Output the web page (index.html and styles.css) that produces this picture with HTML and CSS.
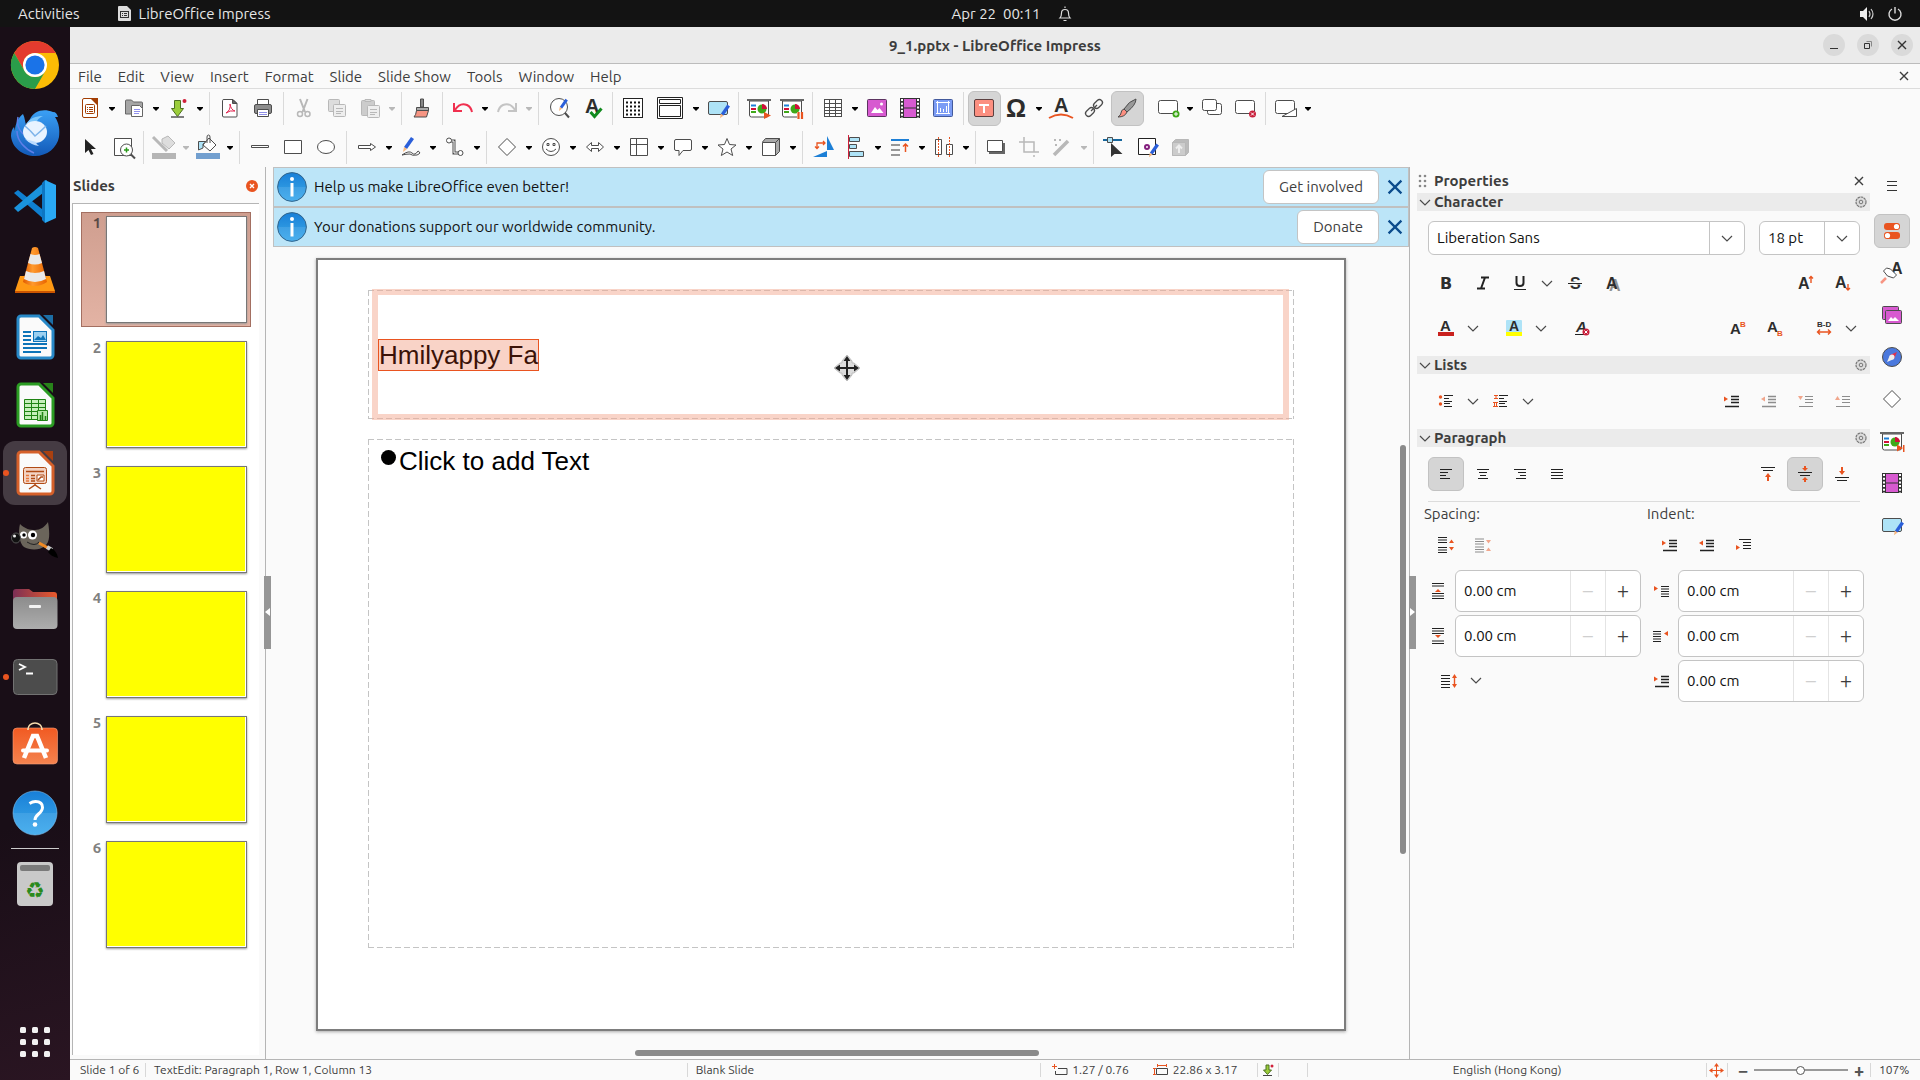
FILE: index.html
```html
<!DOCTYPE html>
<html lang="en">
<head>
  <meta charset="UTF-8">
  <meta name="viewport" content="width=device-width, initial-scale=1">
  <title>9_1.pptx - LibreOffice Impress</title>
  <link rel="stylesheet" href="styles.css">
</head>
<body>
  <!-- Shared shapes -->
  <svg class="defs" aria-hidden="true">
    <linearGradient id="gInfo" x1="0" y1="0" x2="0" y2="1"><stop offset="0" stop-color="#187fd8"/><stop offset=".5" stop-color="#2b95e0"/><stop offset=".5" stop-color="#3fa0e4"/><stop offset="1" stop-color="#4bb0ee"/></linearGradient>
    <linearGradient id="gBird" x1="0" y1="0" x2="0" y2="1"><stop offset="0" stop-color="#3ba0f5"/><stop offset="1" stop-color="#1259b8"/></linearGradient>
    <linearGradient id="gCone" x1="0" y1="0" x2="1" y2="0"><stop offset="0" stop-color="#e05a00"/><stop offset=".4" stop-color="#ff9a2e"/><stop offset="1" stop-color="#e86400"/></linearGradient>
    <linearGradient id="gFolder" x1="0" y1="0" x2="1" y2="0"><stop offset="0" stop-color="#7b2f55"/><stop offset="1" stop-color="#ea5b2c"/></linearGradient>
    <linearGradient id="gGrey" x1="0" y1="0" x2="0" y2="1"><stop offset="0" stop-color="#8c8c8c"/><stop offset="1" stop-color="#adadad"/></linearGradient>
    <linearGradient id="gBag" x1="0" y1="0" x2="0" y2="1"><stop offset="0" stop-color="#f15a22"/><stop offset="1" stop-color="#f4834f"/></linearGradient>
    <symbol id="caret" viewBox="0 0 8 4"><path d="M1 0h6v1L4 4 1 1z" fill="currentColor"/></symbol>
    <symbol id="chev" viewBox="0 0 12 7"><path d="M1 1l5 5 5-5" fill="none" stroke="#4a4a4a" stroke-width="1.2"/></symbol>
    <symbol id="cross" viewBox="0 0 10 10"><path d="M1 1l8 8M9 1L1 9" fill="none" stroke="currentColor" stroke-width="1.4"/></symbol>
    <symbol id="gear" viewBox="0 0 12 12"><circle cx="6" cy="6" r="5" fill="#dcdcdc" stroke="#777" stroke-width="1.2" stroke-dasharray="2.6 .6"/><circle cx="6" cy="6" r="1.8" fill="none" stroke="#777"/></symbol>
    <symbol id="info" viewBox="0 0 30 30"><circle cx="15" cy="15" r="14.4" fill="url(#gInfo)" stroke="#33658c"/><circle cx="15" cy="7" r="2" fill="#fff"/><path d="M13.5 11h3v13.500h-3z" fill="#fff"/></symbol>
    <symbol id="pencil" viewBox="0 0 12 16"><path d="M2 11L9 1l3 2-7 10z" fill="#2b5fd9"/><path d="M2 11l3 2-4 3z" fill="#f7b77f"/></symbol>
    <symbol id="screen" viewBox="0 0 24 24"><path d="M2.500 5v14a2 2 0 0 0 2 2h15a2 2 0 0 0 2-2V5z" fill="#fff" stroke="#4d4d4d"/><path d="M0 3h24v2H0z" fill="#666"/><path d="M4 8.500h5v2H4z" fill="#1c7fd6"/><path d="M4 12h5v2H4z" fill="#d0103a"/><path d="M4 15h5v2H4z" fill="#3fa819"/><circle cx="15" cy="13" r="4.500" fill="#3fa819"/><path d="M15 13V8a5 5 0 0 1 5 5z" fill="#d0103a"/></symbol>
    <symbol id="film" viewBox="0 0 24 24"><path d="M2 2h20v20H2z" fill="#333"/><path d="M6 3h12v8.500H6zM6 12.500h12V21H6z" fill="#d75ad0"/><path d="M4 3v19M20 3v19" stroke="#fff" stroke-width="2" stroke-dasharray="2 1.700"/></symbol>
    <symbol id="master" viewBox="0 0 24 24"><rect x="2.500" y="5.500" width="19" height="13" rx="1.500" fill="#aee3f7" stroke="#4d4d4d"/><use href="#pencil" x="13" y="7" width="11" height="16"/></symbol>
    <symbol id="indent" viewBox="0 0 16 14"><path d="M8 2.500h8M8 5.500h8M8 8.500h8M2 12.500h14" stroke="#222" stroke-width="1.300" /><path d="M1 2.500l4 2.500-4 2.500z" fill="#e95420"/></symbol>
    <symbol id="outdent" viewBox="0 0 16 14"><path d="M8 2.500h8M8 5.500h8M8 8.500h8M2 12.500h14" stroke="#222" stroke-width="1.300"/><path d="M5 2.500L1 5l4 2.500z" fill="#e95420"/></symbol>
  </svg>

  <!-- Desktop top bar -->
  <header class="topbar">
    <div class="topbar-left">
      <button>Activities</button>
      <button class="app-name"><svg width="13" height="15" viewBox="0 0 13 15"><path d="M1 0h8l4 4v10a1 1 0 0 1-1 1H1a1 1 0 0 1-1-1V1a1 1 0 0 1 1-1z" fill="#ddd"/><rect x="2.500" y="5.500" width="8" height="6" fill="none" stroke="#333"/><path d="M4 7.500h1M6 7.500h3M4 9.500h1M6 9.500h3" stroke="#333"/></svg>LibreOffice Impress</button>
    </div>
    <div class="topbar-mid"><time>Apr 22&nbsp; 00:11</time>
      <svg width="14" height="16" viewBox="0 0 14 16" fill="none" stroke="#ddd" stroke-width="1.200"><path d="M2 12c1-1 1.500-2 1.500-5a3.500 3.500 0 0 1 7 0c0 3 .5 4 1.500 5zM5.500 14.500h3M7 2V.5"/></svg>
    </div>
    <div class="topbar-right">
      <svg width="15" height="14" viewBox="0 0 15 14"><path d="M0 4h3l4-4v14l-4-4H0z" fill="#eee"/><path d="M9 4q2 3 0 6M11 2q4 5 0 10" fill="none" stroke="#ccc" stroke-width="1.200"/></svg>
      <svg width="14" height="14" viewBox="0 0 14 14" fill="none" stroke="#ddd" stroke-width="1.400"><path d="M4 2a6 6 0 1 0 6 0M7 0v6.500"/></svg>
    </div>
  </header>

  <div class="desktop">
    <nav class="dock" aria-label="Dock">
      <button title="Chrome"><svg viewBox="0 0 48 48"><circle cx="24" cy="24" r="24" fill="#fbbc05"/><path d="M3.200 12A24 24 0 0 1 44.800 12H24a12 12 0 0 0-10.400 18z" fill="#e33b2e"/><path d="M3.200 12A24 24 0 0 0 24 48l10.400-18a12 12 0 0 1-20.800 0z" fill="#2a9d4a"/><circle cx="24" cy="24" r="12" fill="#fff"/><circle cx="24" cy="24" r="9.600" fill="#1a73e8"/></svg></button>
      <button title="Thunderbird"><svg viewBox="0 0 48 48"><path d="M19 10C23 2 32-1 42 3c3 0 4 2 5 5l-3 0c4 6 5 13 4 20-2 11-12 19-24 19S1 39 0 27c0-4 1-7 3-9l1 4C4 14 8 8 12 5c2 4 2 8 3 11z" fill="url(#gBird)"/><path d="M15 15c4-6 10-8 17-8-6 3-7 6-6 8z" fill="#7cc6fb"/><path d="M7 8c-2 8 1 13 5 17M6 22c0 10 8 18 17 22" fill="none" stroke="#5f7fe8" stroke-width="1.500"/><ellipse cx="24" cy="23" rx="12" ry="11" fill="#e8f3ff"/><path d="M14 17q6 5 10 10 6-5 11-10" fill="none" stroke="#7eb4ea" stroke-width="1.500"/><path d="M14 30q6 6 14 7-3-2-3-4" fill="#bcdcff"/></svg></button>
      <button title="Visual Studio Code"><svg viewBox="0 0 48 48"><path d="M3 16l4-3 29 23v9z" fill="#0f7fd0"/><path d="M3 31l4 4 29-22V3z" fill="#1a93dd"/><path d="M34 3l11 5v33l-11 5z" fill="#2aa9f4"/><path d="M34 3v43l-3-3V6z" fill="#0d76c2"/></svg></button>
      <button title="VLC"><svg viewBox="0 0 48 48"><path d="M9 31h30l5 15v1.500H4V46z" fill="#ff9914"/><path d="M4 46h40v2H4z" fill="#cc5500"/><path d="M21 3q3-2 6 0l9 34q-12 8-24 0z" fill="url(#gCone)"/><path d="M19.500 9q4.500 2 9 0l2.500 9q-7 3-14 0zM15 26q9 4 18 0l2 8q-11 6-22 0z" fill="#e9e9e9"/></svg></button>
      <button title="Writer"><svg viewBox="0 0 48 48"><path d="M10 3h18l14 14v25a3 3 0 0 1-3 3H10a3 3 0 0 1-3-3V6a3 3 0 0 1 3-3z" fill="#fafafa" stroke="#2889c8" stroke-width="3"/><path d="M32 2h10v10z" fill="#1c6ea6"/><path d="M12 19h8M12 23h8M12 27h8M12 31h24M12 35h24M12 39h18" stroke="#0e74b8" stroke-width="2"/><rect x="22.500" y="18.500" width="13" height="10" fill="#9bd0f0" stroke="#0e74b8"/><path d="M23 27l4-4 3 2 2-3 3 5z" fill="#0e74b8"/></svg></button>
      <button title="Calc"><svg viewBox="0 0 48 48"><path d="M10 3h18l14 14v25a3 3 0 0 1-3 3H10a3 3 0 0 1-3-3V6a3 3 0 0 1 3-3z" fill="#fafafa" stroke="#2b9c23" stroke-width="3"/><path d="M32 2h10v10z" fill="#28831a"/><path d="M13.500 18.500h21v20h-21z" fill="#c6efbb" stroke="#1f8313"/><path d="M13 22.500h22M13 26.500h22M13 30.500h22M13 34.500h22M20.500 18v20M27.500 18v20" stroke="#1f8313"/><path d="M26.500 29.500h10v10h-10z" fill="#b5e8a7" stroke="#1f8313"/><path d="M29.500 39v-5M31.500 39v-8M34.500 39v-4" stroke="#1f8313" stroke-width="1.500"/></svg></button>
      <button class="active running" title="Impress"><svg viewBox="0 0 48 48"><path d="M10 3h18l14 14v25a3 3 0 0 1-3 3H10a3 3 0 0 1-3-3V6a3 3 0 0 1 3-3z" fill="#fafafa" stroke="#d5602a" stroke-width="3"/><path d="M32 2h10v10z" fill="#a94010"/><rect x="12.500" y="18.500" width="23" height="16" rx="2" fill="#f3d3c3" stroke="#b04a14"/><path d="M15 22.500h18M20 26.500h4M20 29.500h4M20 32h4" stroke="#b04a14" stroke-width="1.500"/><path d="M15 26.500h3M15 29.500h3M15 32h3" stroke="#e8793c" stroke-width="1.500"/><path d="M26 26h7v6h-7z" fill="#fff" stroke="#b04a14"/><path d="M27 31l3-3 2 0M18 40l6-4 6 4M24 34v3" fill="none" stroke="#b04a14" stroke-width="1.500"/></svg></button>
      <button title="GIMP"><svg viewBox="0 0 48 48"><path d="M9 7c5 5 10 6 15 6s10-3 13-8c2 12 2 20-3 24-6 5-16 4-21 1-5-4-6-15-4-23z" fill="#6b655b"/><circle cx="12.500" cy="18" r="3.500" fill="#fff"/><circle cx="21.500" cy="18" r="4.500" fill="#fff"/><circle cx="13" cy="18" r="1.700"/><circle cx="22" cy="18" r="2.200"/><ellipse cx="5" cy="21" rx="4.500" ry="5" fill="#111" stroke="#555"/><circle cx="3.500" cy="19" r="1.500" fill="#eee"/><path d="M16 25q8 5 12 0" fill="none" stroke="#222"/><path d="M28 26l9 5" stroke="#f08a24" stroke-width="3"/><path d="M36 30l5 3" stroke="#ccc" stroke-width="4"/><path d="M40 31c4 2 6 5 7 10-5-1-8-3-10-6z" fill="#000"/></svg></button>
      <button title="Files"><svg viewBox="0 0 48 48"><path d="M2 7a3 3 0 0 1 3-3h13l4 3h21a3 3 0 0 1 3 3v12H2z" fill="url(#gFolder)"/><rect x="2" y="12" width="44.500" height="32" rx="4" fill="url(#gGrey)"/><rect x="18" y="20" width="12" height="3" rx="1" fill="#f2f2f2"/></svg></button>
      <button class="running" title="Terminal"><svg viewBox="0 0 48 48"><rect x="2.500" y="6.500" width="43.500" height="35" rx="4" fill="#4c4c4c" stroke="#727272"/><path d="M8 11l6 3-6 3M15 20.500h7" fill="none" stroke="#fff" stroke-width="1.800"/></svg></button>
      <button title="Software"><svg viewBox="0 0 48 48"><rect x="2" y="7" width="44.500" height="36" rx="4" fill="url(#gBag)" stroke="#f7a07a" stroke-width=".6"/><path d="M17 9V8a7 6 0 0 1 14 0v1" fill="none" stroke="#f7dcae" stroke-width="1.600"/><path d="M13 37l9-22h4l9 22" fill="none" stroke="#fff" stroke-width="4.500"/><path d="M12 29.500h24" stroke="#fff" stroke-width="4" stroke-linecap="round"/></svg></button>
      <button title="Help"><svg viewBox="0 0 48 48"><circle cx="24" cy="24" r="22" fill="url(#gInfo)" stroke="#7dc3f3" stroke-width=".6"/><path d="M18.500 14.500q3-2 6-2 7 0 7 6 0 3-4 6.500-3.500 3-3.500 6" fill="none" stroke="#fff" stroke-width="3"/><circle cx="24" cy="35.500" r="2.300" fill="#fff"/></svg></button>
      <hr>
      <button title="Trash"><svg viewBox="0 0 48 48"><rect x="6" y="2" width="36" height="44" rx="4" fill="#c9c9c9"/><rect x="9" y="5" width="30" height="6" rx="2" fill="#7a7a7a"/></svg><span class="recycle">♻</span></button>
      <button class="apps" title="Show Applications"><svg viewBox="0 0 30 30" fill="#f2f2f2"><rect width="6" height="6" rx="1.500"/><rect x="12" width="6" height="6" rx="1.500"/><rect x="24" width="6" height="6" rx="1.500"/><rect y="12" width="6" height="6" rx="1.500"/><rect x="12" y="12" width="6" height="6" rx="1.500"/><rect x="24" y="12" width="6" height="6" rx="1.500"/><rect y="24" width="6" height="6" rx="1.500"/><rect x="12" y="24" width="6" height="6" rx="1.500"/><rect x="24" y="24" width="6" height="6" rx="1.500"/></svg></button>
    </nav>

    <div class="window">
      <div class="titlebar">
        <h1>9_1.pptx - LibreOffice Impress</h1>
        <div class="win-buttons">
          <button title="Minimize"><svg width="10" height="10" viewBox="0 0 10 10"><path d="M1 8.500h8" stroke="#333"/></svg></button>
          <button title="Restore"><svg width="10" height="10" viewBox="0 0 10 10" fill="none"><path d="M1.500 3.500h5v5h-5z" stroke="#333"/><path d="M3.500 1.500h5v5" stroke="#888"/></svg></button>
          <button title="Close"><svg width="10" height="10"><use href="#cross"/></svg></button>
        </div>
      </div>

      <div class="menubar">
        <nav>
          <button>File</button><button>Edit</button><button>View</button><button>Insert</button><button>Format</button><button>Slide</button><button>Slide Show</button><button>Tools</button><button>Window</button><button>Help</button>
        </nav>
        <button title="Close Document"><svg width="10" height="10"><use href="#cross"/></svg></button>
      </div>

      <!-- Standard toolbar -->
      <div class="toolbar">
        <button class="tool" title="New"><svg viewBox="0 0 24 24"><path d="M6 2.500h8.500l5 5V20a1.500 1.500 0 0 1-1.500 1.500H6A1.500 1.500 0 0 1 4.500 20V4A1.500 1.500 0 0 1 6 2.500z" stroke="#a33e03" fill="#fff"/><path d="M12 2h8v8z" fill="#a33e03" stroke="none"/><rect x="7.500" y="8.500" width="9" height="9" rx="1" stroke="#a33e03"/><path d="M9 11.500h1M11 11.500h4M9 13.500h1M11 13.500h4M9 15.500h1M11 15.500h4" stroke="#a33e03"/></svg></button><button class="dd" title="New options"><svg><use href="#caret"/></svg></button>
        <button class="tool" title="Open"><svg viewBox="0 0 24 24"><path d="M3.500 18V5q0-1 1-1h5l2 2h8q1 0 1 1v11z" fill="#a5a5a5" stroke="#666"/><path d="M9.500 9.500h8l3 3v8h-11z" fill="#fff" stroke="#666"/><path d="M12 13.500h6M12 15.500h6M12 17.500h5" stroke="#9090ee"/></svg></button><button class="dd" title="Open options"><svg><use href="#caret"/></svg></button>
        <button class="tool" title="Save"><svg viewBox="0 0 24 24"><path d="M8.500 4.500h6v8h3l-6 8-6-8h3z" fill="#9bcd3a" stroke="#4d7020"/><path d="M5 21h13" stroke="#555" stroke-width="1.500"/><circle cx="18.500" cy="5" r="2" fill="#d0203a" stroke="none"/></svg></button><button class="dd" title="Save options"><svg><use href="#caret"/></svg></button>
        <hr>
        <button class="tool" title="Export as PDF"><svg viewBox="0 0 24 24"><path d="M6 3.500h9l4 4V20q0 1-1 1H6q-1.500 0-1.500-1V4.500q0-1 1.500-1z" fill="#fff"/><path d="M14.500 3.500v4H19z" fill="#666"/><path d="M8 17q5-3 4-9 1 6 5 7-5-1-9 2z" stroke="#e0244f"/></svg></button>
        <button class="tool" title="Print"><svg viewBox="0 0 24 24"><path d="M6.500 3.500h11v5h-11z" fill="#fff"/><rect x="3.500" y="8.500" width="17" height="9" rx="1.500" fill="#8d8d8d"/><path d="M6.500 13.500h11v7h-11z" fill="#fff"/><path d="M8 16.500h8M8 18.500h8" stroke="#8f8fe8"/></svg></button>
        <hr>
        <button class="tool" title="Cut" disabled><svg viewBox="0 0 24 24" class="dim"><path d="M8 3l5 13M15.500 3l-5 13" stroke-width="2"/><circle cx="8" cy="18" r="2.500" stroke-width="1.500"/><circle cx="15.500" cy="18" r="2.500" stroke-width="1.500"/></svg></button>
        <button class="tool" title="Copy" disabled><svg viewBox="0 0 24 24" class="dim"><rect x="3.500" y="3.500" width="11" height="12" rx="1" fill="#ddd"/><rect x="8.500" y="8.500" width="12" height="12" rx="1" fill="#eee"/><path d="M11 12.500h7M11 15.500h7M11 17.500h5"/></svg></button>
        <button class="tool" title="Paste" disabled><svg viewBox="0 0 24 24" class="dim"><rect x="3.500" y="4.500" width="13" height="15" rx="1" fill="#ccc"/><path d="M7 3.500h6v2H7z" fill="#ddd"/><rect x="9.500" y="9.500" width="12" height="12" rx="1" fill="#eee"/><path d="M12 13.500h7M12 16.500h7M12 18.500h5"/></svg></button><button class="dd" title="Paste options" disabled><svg><use href="#caret"/></svg></button>
        <hr>
        <button class="tool" title="Clone Formatting"><svg viewBox="0 0 24 24"><path d="M10.500 3h3v8h-3z" fill="#888"/><path d="M6.500 11.500h12v3h-12z" fill="#aaa"/><path d="M6.500 14.500h12l-2 6.500H4q2-2 2.500-6.500z" fill="#f79583"/></svg></button>
        <hr>
        <button class="tool" title="Undo"><svg viewBox="0 0 24 24"><path d="M3 7v8h8M4 14q5-8 12-5 4 2 5 7" stroke="#f0304f" stroke-width="2"/></svg></button><button class="dd" title="Undo list"><svg><use href="#caret"/></svg></button>
        <button class="tool" title="Redo" disabled><svg viewBox="0 0 24 24"><path d="M21 7v8h-8M20 14Q15 6 8 9q-4 2-5 7" stroke="#c4c4c4" stroke-width="2"/></svg></button><button class="dd" title="Redo list" disabled><svg><use href="#caret"/></svg></button>
        <hr>
        <button class="tool" title="Find and Replace"><svg viewBox="0 0 24 24"><circle cx="12" cy="11" r="8.500" fill="#fff"/><path d="M18 17l4 4.500" stroke-width="2"/><use href="#pencil" x="11" y="2" width="10" height="13"/></svg></button>
        <button class="tool" title="Spelling"><svg viewBox="0 0 24 24"><text x="5" y="17" class="ic-a" font-size="20">A</text><path d="M10.500 16l4 4.500 7-8" stroke="#118a1e" stroke-width="3"/></svg></button>
        <hr>
        <button class="tool" title="Display Grid"><svg viewBox="0 0 24 24"><rect x="2.500" y="2.500" width="19" height="19" fill="#fff" stroke="#222"/><path d="M5 6.500h14M5 10.500h14M5 14.500h14M5 18.500h14" stroke="#111" stroke-width="2" stroke-dasharray="2 2"/></svg></button>
        <button class="tool wide" title="Display Views"><svg viewBox="0 0 28 24"><path d="M1.500 1.500h25v21h-25z" fill="#fff" stroke="#222"/><path d="M3.500 3.500h21v4h-21zM3.500 9.500h21v11h-21z" stroke="#222"/></svg></button><button class="dd" title="Views"><svg><use href="#caret"/></svg></button>
        <button class="tool" title="Master Slide"><svg viewBox="0 0 24 24"><use href="#master"/></svg></button>
        <hr>
        <button class="tool" title="Start from First Slide"><svg viewBox="0 0 24 24"><use href="#screen"/><path d="M17 16l7 3.500-7 3.500z" fill="#e95420" stroke="none"/></svg></button>
        <button class="tool" title="Start from Current Slide"><svg viewBox="0 0 24 24"><use href="#screen"/><path d="M17 16h7v7h-7z" fill="#fafafa" stroke="none"/><path d="M18.500 16v7M22 16v7" stroke="#e95420" stroke-width="2.200"/></svg></button>
        <hr>
        <button class="tool" title="Table"><svg viewBox="0 0 24 24"><rect x="3.500" y="3.500" width="17" height="17" fill="#fff"/><path d="M3.500 7.500h17M3.500 11.500h17M3.500 14.500h17M3.500 17.500h17M8.500 3.500v17M14.500 3.500v17"/></svg></button><button class="dd" title="Table size"><svg><use href="#caret"/></svg></button>
        <button class="tool" title="Insert Image"><svg viewBox="0 0 24 24"><rect x="2.500" y="3.500" width="19" height="17" rx="1" fill="#d75ad0" stroke="#5c3360"/><path d="M6 17l4-6 2.500 3 2-2 4 5z" fill="#fff" stroke="none"/><circle cx="16.500" cy="8" r="1.500" fill="#fff" stroke="none"/></svg></button>
        <button class="tool" title="Insert Audio or Video"><svg viewBox="0 0 24 24"><use href="#film"/></svg></button>
        <button class="tool" title="Insert Chart"><svg viewBox="0 0 24 24"><rect x="2.500" y="3.500" width="19" height="17" rx="1" fill="#7b9cf5" stroke="#435a9c"/><path d="M6.500 5v13M5 17.500h14M5 6.500h14M17.500 5v13M9.500 16v-4M12.500 16v-3M15.500 16v-6" stroke="#fff"/></svg></button>
        <hr>
        <button class="tool on" title="Insert Text Box"><svg viewBox="0 0 24 24"><rect x="2.500" y="3.500" width="19" height="17" rx="1.500" fill="#fc8f80" stroke="#5c4040"/><path d="M7 9h10M12 9v8" stroke="#fff" stroke-width="2"/></svg></button>
        <button class="tool" title="Insert Special Characters"><svg viewBox="0 0 24 24"><text x="1" y="21" class="ic-a" font-size="25">Ω</text></svg></button><button class="dd" title="Recent characters"><svg><use href="#caret"/></svg></button>
        <button class="tool" title="Fontwork"><svg viewBox="0 0 24 24"><text x="5" y="16" class="ic-a" font-size="20">A</text><path d="M0 22q12-7 24 0" stroke="#e95420" stroke-width="2"/></svg></button>
        <button class="tool" title="Insert Hyperlink"><svg viewBox="0 0 24 24" stroke-width="1.300"><rect x="-5" y="-3" width="10" height="6" rx="3" transform="translate(8 16) rotate(-45)"/><rect x="-5" y="-3" width="10" height="6" rx="3" transform="translate(16 8) rotate(-45)"/><path d="M9 15l6-6"/></svg></button>
        <button class="tool on" title="Show Draw Functions"><svg viewBox="0 0 24 24"><path d="M9 13Q14 5 21 3q0 6-9 13z" fill="#999"/><path d="M9 13l3 3q-2 5-9 5 3-2 3-4 0-3 3-4z" fill="#fc8f80"/></svg></button>
        <span class="space"></span>
        <button class="tool" title="New Slide"><svg viewBox="0 0 24 24"><rect x="2.500" y="4.500" width="19" height="13" rx="2" fill="#fff"/><circle cx="20" cy="18" r="3.500" fill="#3fa819" stroke="none"/><path d="M18 18h4M20 16v4" stroke="#fff"/></svg></button><button class="dd" title="Slide layouts"><svg><use href="#caret"/></svg></button>
        <button class="tool" title="Duplicate Slide"><svg viewBox="0 0 24 24"><rect x="7.500" y="7.500" width="14" height="11" rx="2" fill="#fff"/><rect x="2.500" y="3.500" width="14" height="11" rx="2" fill="#fff"/></svg></button>
        <button class="tool" title="Delete Slide"><svg viewBox="0 0 24 24"><rect x="2.500" y="4.500" width="19" height="13" rx="2" fill="#fff"/><circle cx="19.500" cy="18" r="3.500" fill="#c9203c" stroke="none"/><path d="M18 16.500l3 3M21 16.500l-3 3" stroke="#fff"/></svg></button>
        <hr>
        <button class="tool" title="Slide Layout"><svg viewBox="0 0 24 24"><rect x="1.500" y="4.500" width="19" height="13" rx="2" fill="#fff"/><path d="M8 20.500l14.500-8v8z" fill="#fff"/></svg></button><button class="dd" title="Layouts"><svg><use href="#caret"/></svg></button>
      </div>

      <!-- Drawing toolbar -->
      <div class="toolbar">
        <button class="tool" title="Select"><svg viewBox="0 0 24 24"><path d="M7 4v14l3.500-3 2.500 5 2.500-1-2.500-5h5z" fill="#222" stroke="none"/></svg></button>
        <button class="tool" title="Zoom &amp; Pan"><svg viewBox="0 0 24 24"><path d="M3.500 3.500h17v17h-17z" fill="#fff"/><circle cx="15.500" cy="15" r="6" fill="#fff"/><path d="M20 19.500l4 4" stroke-width="2"/><path d="M13 15h5M15.500 12.500v5" stroke="#2a9a1a" stroke-width="1.500"/></svg></button>
        <hr>
        <button class="tool" title="Line Color" disabled><svg viewBox="0 0 24 24" class="dim"><path d="M1 2l14 14" stroke-width="3"/><path d="M10 4l6-3 7 7-6 6-7-6z" fill="#ddd"/><path d="M0 18h24v6H0z" fill="#b5b5b5" stroke="none"/></svg></button><button class="dd" title="Line colours" disabled><svg><use href="#caret"/></svg></button>
        <button class="tool" title="Fill Color"><svg viewBox="0 0 24 24"><path d="M2.500 15V6.500h8L7 9v4z" fill="#aee3f7"/><path d="M13 3l7 7-6 6-7-6z" fill="#fff"/><path d="M11 8V2q0-2 1.500-2T14 2v6"/><path d="M0 18h24v6H0z" fill="#729fcf" stroke="none"/></svg></button><button class="dd" title="Fill colours"><svg><use href="#caret"/></svg></button>
        <hr>
        <button class="tool" title="Insert Line"><svg viewBox="0 0 24 24"><path d="M3.500 10.500h17v2h-17z" fill="#fff"/></svg></button>
        <button class="tool" title="Rectangle"><svg viewBox="0 0 24 24"><path d="M3.500 5.500h17v13h-17z" fill="#fff"/></svg></button>
        <button class="tool" title="Ellipse"><svg viewBox="0 0 24 24"><ellipse cx="12" cy="12" rx="8.500" ry="6.500" fill="#fff"/></svg></button>
        <hr>
        <button class="tool" title="Lines and Arrows"><svg viewBox="0 0 24 24"><path d="M3.500 10.500h12V8.500l5 3.500-5 3.500v-2h-12z" fill="#fff"/></svg></button><button class="dd" title="More arrows"><svg><use href="#caret"/></svg></button>
        <button class="tool" title="Curves and Polygons"><svg viewBox="0 0 24 24"><path d="M3 20q7-5 10-2t6-2q4 2-1 4-5 1-7-1-4 0-8 1z" fill="#fff"/><use href="#pencil" x="2" y="1" width="14" height="16"/></svg></button><button class="dd" title="More curves"><svg><use href="#caret"/></svg></button>
        <button class="tool" title="Connectors"><svg viewBox="0 0 24 24"><path d="M7 6h4v12h5" stroke-width="3"/><path d="M7 6h4v12h5" stroke="#fff"/><circle cx="6" cy="5.500" r="2.500" fill="#fff"/><circle cx="17.500" cy="18" r="2.500" fill="#fff"/></svg></button><button class="dd" title="More connectors"><svg><use href="#caret"/></svg></button>
        <hr>
        <button class="tool" title="Basic Shapes"><svg viewBox="0 0 24 24"><path d="M12 3.500l8.500 8.500-8.500 8.500L3.500 12z" fill="#fff"/></svg></button><button class="dd" title="More shapes"><svg><use href="#caret"/></svg></button>
        <button class="tool" title="Symbol Shapes"><svg viewBox="0 0 24 24"><circle cx="12" cy="12" r="8.500" fill="#fff"/><path d="M8 8.500h2v2H8zM14 8.500h2v2h-2zM7 14q5 5 10 0"/></svg></button><button class="dd" title="More symbols"><svg><use href="#caret"/></svg></button>
        <button class="tool" title="Block Arrows"><svg viewBox="0 0 24 24"><path d="M3.500 12l5-4.500v3h7v-3l5 4.500-5 4.500v-3h-7v3z" fill="#fff"/></svg></button><button class="dd" title="More block arrows"><svg><use href="#caret"/></svg></button>
        <button class="tool" title="Flowchart"><svg viewBox="0 0 24 24"><path d="M3.500 3.500h17v17h-17zM9.500 3.500v17M3.500 9.500h17" fill="#fff"/></svg></button><button class="dd" title="More flowchart"><svg><use href="#caret"/></svg></button>
        <button class="tool" title="Callout Shapes"><svg viewBox="0 0 24 24"><path d="M5 4.500h14q1.500 0 1.500 1.500v8q0 1.500-1.500 1.500h-7l-4 5v-5H5q-1.500 0-1.500-1.500V6q0-1.500 1.500-1.500z" fill="#fff"/></svg></button><button class="dd" title="More callouts"><svg><use href="#caret"/></svg></button>
        <button class="tool" title="Stars and Banners"><svg viewBox="0 0 24 24"><path d="M12 3.500l2.500 6 6.500.5-5 4 1.700 6.500L12 17l-5.700 3.500L8 14l-5-4 6.500-.5z" fill="#fff"/></svg></button><button class="dd" title="More stars"><svg><use href="#caret"/></svg></button>
        <button class="tool" title="3D Objects"><svg viewBox="0 0 24 24"><path d="M3.500 7l3-3.500h14v13l-4 4z" fill="#aaa"/><path d="M3.500 7.500h13v13h-13zM16.500 7.500l4-4" fill="#fff"/></svg></button><button class="dd" title="More 3D"><svg><use href="#caret"/></svg></button>
        <hr>
        <button class="tool" title="Rotate"><svg viewBox="0 0 24 24"><path d="M16 1l7 14h-7z" fill="#1c7fd6" stroke="none"/><path d="M2 22l14-6v6z" fill="#1c7fd6" stroke="none"/><path d="M6 13V8h8M4 11.500l2 2 2-2M12 6l2 2-2 2" stroke="#e95420" stroke-width="1.300"/></svg></button>
        <button class="tool" title="Align Objects"><svg viewBox="0 0 24 24"><path d="M4.500 0v24" stroke="#d0203a"/><path d="M5.500 2.500h10v4h-10zM5.500 9.500h7v4h-7zM5.500 16.500h14v5h-14z" fill="#aee3f7"/></svg></button><button class="dd" title="Alignments"><svg><use href="#caret"/></svg></button>
        <button class="tool" title="Arrange"><svg viewBox="0 0 24 24"><path d="M3 5h18" stroke="#1c7fd6" stroke-width="2"/><path d="M3 10h9M3 15h9M3 20h9" stroke-width="1.500" stroke="#777"/><path d="M17.500 9v8M15 11.500l2.500-2.500 2.500 2.500" stroke="#e95420" stroke-width="1.500"/></svg></button><button class="dd" title="Arrangements"><svg><use href="#caret"/></svg></button>
        <button class="tool" title="Distribute"><svg viewBox="0 0 24 24"><path d="M3.500 4.500h6v15h-6zM14.500 9.500h6v10h-6z" fill="#fff"/><path d="M6.500 2v21M17.500 2v21" stroke="#e95420" stroke-dasharray="2 1"/></svg></button><button class="dd" title="Distributions"><svg><use href="#caret"/></svg></button>
        <hr>
        <button class="tool" title="Shadow"><svg viewBox="0 0 24 24"><path d="M5 8h16v11H5z" fill="#666" stroke="none"/><path d="M3.500 5.500h15v11h-15z" fill="#fff"/></svg></button>
        <button class="tool" title="Crop Image" disabled><svg viewBox="0 0 24 24" class="dim" stroke-width="1.500"><path d="M2 7h15v10M7 2v15h15M17 20v2"/></svg></button>
        <button class="tool" title="Filter" disabled><svg viewBox="0 0 24 24" class="dim"><path d="M4 20L18 6" stroke-width="3.500"/><path d="M4 4l2 2m0-2L4 6M9 4l2 2m0-2L9 6M5 9l2 2m0-2l-2 2"/></svg></button><button class="dd" title="Filters" disabled><svg><use href="#caret"/></svg></button>
        <hr>
        <button class="tool" title="Toggle Point Edit"><svg viewBox="0 0 24 24"><path d="M1 5h19" stroke="#16669c" stroke-width="2"/><path d="M9 8v14l3.500-3 8 0z" fill="#333" stroke="none"/><path d="M5.500 2.500h5v5h-5z" fill="#aee3f7"/></svg></button>
        <button class="tool" title="Glue Points"><svg viewBox="0 0 24 24"><path d="M3.500 3.500h17v16h-17z" fill="#fff" stroke="#222"/><circle cx="12" cy="12" r="2" stroke="#85207f" stroke-width="2"/><use href="#pencil" x="13" y="7" width="11" height="16"/></svg></button>
        <button class="tool" title="Toggle Extrusion" disabled><svg viewBox="0 0 24 24" class="dim"><path d="M4.500 7.500l3-3h13v13l-3 3h-13z" fill="#bbb"/><path d="M4.500 7.500h13v13h-13z" fill="#ccc"/><path d="M11 18v-7M8 13.500l3-3 3 3" stroke="#eee" stroke-width="2"/></svg></button>
      </div>

      <main class="work">
        <section class="slides">
          <header><h2>Slides</h2><button title="Close Pane"><svg width="12" height="12" viewBox="0 0 12 12"><circle cx="6" cy="6" r="6" fill="#e95420"/><path d="M4 4l4 4M8 4L4 8" stroke="#fff" stroke-width="1.400"/></svg></button></header>
          <ol>
            <li><button class="thumb selected"><span>1</span><i></i></button></li>
            <li><button class="thumb"><span>2</span><i></i></button></li>
            <li><button class="thumb"><span>3</span><i></i></button></li>
            <li><button class="thumb"><span>4</span><i></i></button></li>
            <li><button class="thumb"><span>5</span><i></i></button></li>
            <li><button class="thumb"><span>6</span><i></i></button></li>
          </ol>
        </section>
        <div class="splitter"><button title="Hide slides"><svg width="5" height="8" viewBox="0 0 5 8"><path d="M5 0v8L0 4z" fill="#fff"/></svg></button></div>

        <section class="editor">
          <div class="infobar"><svg><use href="#info"/></svg><p>Help us make LibreOffice even better!</p><button class="btn">Get involved</button><button class="close" title="Close"><svg width="16" height="16"><use href="#cross"/></svg></button></div>
          <div class="infobar"><svg><use href="#info"/></svg><p>Your donations support our worldwide community.</p><button class="btn">Donate</button><button class="close" title="Close"><svg width="16" height="16"><use href="#cross"/></svg></button></div>
          <div class="canvas">
            <article class="slide">
              <div class="holder title"><span class="frame"></span><mark>Hmilyappy Fa</mark>
                <svg class="pointer" width="28" height="28" viewBox="0 0 28 28"><path d="M14 1l5 6v2h2l6 5-6 5h-2v2l-5 6-5-6v-2H7l-6-5 6-5h2V7z" fill="#ddd" stroke="#bbb"/><path d="M14 2l3.500 5h-7zM14 26l3.500-5h-7zM2 14l5-3.500v7zM26 14l-5-3.500v7z" fill="#222"/><path d="M14 5v18M5 14h18" stroke="#222" stroke-width="2"/></svg>
              </div>
              <div class="holder body"><b></b><p>Click to add Text</p></div>
            </article>
            <span class="vscroll"></span>
            <span class="hscroll"></span>
          </div>
        </section>
        <div class="splitter right"><button title="Hide sidebar"><svg width="5" height="8" viewBox="0 0 5 8"><path d="M0 0v8l5-4z" fill="#fff"/></svg></button></div>

        <aside class="props">
          <header><svg width="10" height="14" viewBox="0 0 10 14" fill="#888"><circle cx="2" cy="2" r="1.300"/><circle cx="7" cy="2" r="1.300"/><circle cx="2" cy="7" r="1.300"/><circle cx="7" cy="7" r="1.300"/><circle cx="2" cy="12" r="1.300"/><circle cx="7" cy="12" r="1.300"/></svg><h2>Properties</h2><button title="Close Sidebar"><svg width="10" height="10"><use href="#cross"/></svg></button></header>

          <h3><svg class="chev"><use href="#chev"/></svg>Character<button title="More options"><svg width="12" height="12"><use href="#gear"/></svg></button></h3>
          <div class="panel">
            <div class="row">
              <div class="combo name"><input type="text" aria-label="Font Name" value="Liberation Sans"><button title="Font list"><svg class="chev"><use href="#chev"/></svg></button></div>
              <div class="combo size"><input type="text" aria-label="Font Size" value="18 pt"><button title="Size list"><svg class="chev"><use href="#chev"/></svg></button></div>
            </div>
            <div class="row">
              <button class="pt" title="Bold"><svg viewBox="0 0 16 16"><text x="2" y="14" class="ic-b" font-size="16">B</text></svg></button>
              <button class="pt" title="Italic"><svg viewBox="0 0 16 16"><path d="M6 2.500h8M2 13.500h8M10 2.500L6 13.500" stroke="#222" stroke-width="2"/></svg></button>
              <button class="pt" title="Underline"><svg viewBox="0 0 16 16"><path d="M4.500 1v7q0 3 3.500 3t3.500-3V1" stroke="#222" stroke-width="2"/><path d="M2 14.500h12" stroke="#222"/></svg></button><button class="pd" title="Underline styles"><svg class="chev"><use href="#chev"/></svg></button>
              <button class="pt" title="Strikethrough"><svg viewBox="0 0 16 16"><text x="3" y="14" class="ic-a" font-size="16">S</text><path d="M1 8h14" stroke="#fafafa" stroke-width="3"/><path d="M1 8.500h14" stroke="#222" /></svg></button>
              <button class="pt" title="Shadow"><svg viewBox="0 0 16 16"><text x="5" y="16" class="ic-a" font-size="16" opacity=".5">A</text><text x="2" y="14" class="ic-a" font-size="16">A</text></svg></button>
              <span class="grow"></span>
              <button class="pt" title="Increase Font Size"><svg viewBox="0 0 16 16"><text x="1" y="14" class="ic-a" font-size="16">A</text><path d="M14 8V1M12 3.500l2-2 2 2" stroke="#e95420" stroke-width="1.400"/></svg></button>
              <button class="pt" title="Decrease Font Size"><svg viewBox="0 0 16 16"><text x="1" y="13" class="ic-a" font-size="16">A</text><path d="M14 9v6M12 13l2 2 2-2" stroke="#e95420" stroke-width="1.400"/></svg></button>
            </div>
            <div class="row">
              <button class="pt" title="Font Color"><svg viewBox="0 0 16 16"><text x="2" y="11" class="ic-a" font-size="15">A</text><path d="M0 12h16v4H0z" fill="#c9211e"/></svg></button><button class="pd" title="Font colours"><svg class="chev"><use href="#chev"/></svg></button>
              <button class="pt gap-l" title="Highlighting Color"><svg viewBox="0 0 16 16"><rect width="16" height="16" rx="1" fill="#aee3f7"/><text x="3" y="11" class="ic-a" font-size="14">A</text><path d="M0 12h16v4H0z" fill="#ff0"/></svg></button><button class="pd" title="Highlight colours"><svg class="chev"><use href="#chev"/></svg></button>
              <button class="pt gap-l" title="Clear Formatting"><svg viewBox="0 0 16 16"><text x="2" y="12" class="ic-a" font-size="15" font-style="italic">A</text><path d="M1 14.500h9" stroke="#222"/><circle cx="12" cy="12" r="3.500" fill="#c9203c"/><path d="M10.500 10.500l3 3m0-3l-3 3" stroke="#fff"/></svg></button>
              <span class="grow"></span>
              <button class="pt" title="Superscript"><svg viewBox="0 0 16 16"><text x="1" y="14" class="ic-a" font-size="15">A</text><text x="11" y="7" class="ic-o" font-size="8">B</text></svg></button>
              <button class="pt" title="Subscript"><svg viewBox="0 0 16 16"><text x="1" y="12" class="ic-a" font-size="15">A</text><text x="11" y="16" class="ic-o" font-size="8">B</text></svg></button>
              <button class="pt gap-l" title="Character Spacing"><svg viewBox="0 0 16 16"><text x="1" y="7" class="ic-a" font-size="8">B-D</text><path d="M2 12h12M4 9.500L1.500 12 4 14.500M12 9.500l2.500 2.500-2.500 2.500" stroke="#e95420" stroke-width="1.400"/></svg></button><button class="pd" title="Spacings"><svg class="chev"><use href="#chev"/></svg></button>
            </div>
          </div>

          <h3><svg class="chev"><use href="#chev"/></svg>Lists<button title="More options"><svg width="12" height="12"><use href="#gear"/></svg></button></h3>
          <div class="panel">
            <div class="row">
              <button class="pt" title="Unordered List"><svg viewBox="0 0 16 16"><circle cx="2.500" cy="4" r="1.700" fill="#e95420"/><circle cx="2.500" cy="11" r="1.700" fill="#e95420"/><path d="M6 2.500h9M6 5.500h5M6 8.500h8M6 10.500h6M6 13.500h8" stroke="#222"/></svg></button><button class="pd" title="Bullets"><svg class="chev"><use href="#chev"/></svg></button>
              <button class="pt" title="Ordered List"><svg viewBox="0 0 16 16"><path d="M1 2.500h4M3 2v4M1 5.500h4M0 9.500h5M0 13.500h5M1.500 9v4M3.500 9v4" stroke="#e95420"/><path d="M6 2.500h9M6 5.500h5M6 8.500h8M6 10.500h6M6 13.500h8" stroke="#222"/></svg></button><button class="pd" title="Numbering"><svg class="chev"><use href="#chev"/></svg></button>
              <span class="grow"></span>
              <button class="pt" title="Demote"><svg viewBox="0 0 16 14"><use href="#indent"/></svg></button>
              <button class="pt" title="Promote" disabled><svg viewBox="0 0 16 14"><use href="#outdent"/></svg></button>
              <button class="pt" title="Move Down" disabled><svg viewBox="0 0 16 14"><path d="M8 2.500h8M8 5.500h8M8 8.500h8M2 12.500h14" stroke="#222"/><path d="M1 2h5L3.500 6z" fill="#e95420"/></svg></button>
              <button class="pt" title="Move Up" disabled><svg viewBox="0 0 16 14"><path d="M8 2.500h8M8 5.500h8M8 8.500h8M2 12.500h14" stroke="#222"/><path d="M1 6h5L3.500 2z" fill="#e95420"/></svg></button>
            </div>
          </div>

          <h3><svg class="chev"><use href="#chev"/></svg>Paragraph<button title="More options"><svg width="12" height="12"><use href="#gear"/></svg></button></h3>
          <div class="panel">
            <div class="row">
              <button class="pt on" title="Align Left"><svg viewBox="0 0 16 16"><path d="M2 3.500h12M2 6.500h8M2 9.500h6M2 12.500h10" stroke="#222"/></svg></button>
              <button class="pt" title="Center"><svg viewBox="0 0 16 16"><path d="M2 3.500h12M4 6.500h8M5 9.500h6M3 12.500h10" stroke="#222"/></svg></button>
              <button class="pt" title="Align Right"><svg viewBox="0 0 16 16"><path d="M2 3.500h12M6 6.500h8M8 9.500h6M4 12.500h10" stroke="#222"/></svg></button>
              <button class="pt" title="Justified"><svg viewBox="0 0 16 16"><path d="M2 3.500h12M2 6.500h12M2 9.500h12M2 12.500h12" stroke="#222"/></svg></button>
              <span class="grow"></span>
              <button class="pt" title="Align Top"><svg viewBox="0 0 16 16"><path d="M1 1.500h14M3 4.500h10" stroke="#222"/><path d="M8 15V9" stroke="#e95420" stroke-width="2"/><path d="M5 11l3-4 3 4z" fill="#e95420"/></svg></button>
              <button class="pt on" title="Center Vertically"><svg viewBox="0 0 16 16"><path d="M1 6.500h14M3 9.500h10" stroke="#222"/><path d="M5 2h6L8 5zM5 14h6l-3-3z" fill="#e95420"/><path d="M8 0v3M8 13v3" stroke="#e95420" stroke-width="2"/></svg></button>
              <button class="pt" title="Align Bottom"><svg viewBox="0 0 16 16"><path d="M1 11.500h14M3 14.500h10" stroke="#222"/><path d="M8 1v5" stroke="#e95420" stroke-width="2"/><path d="M5 5l3 4 3-4z" fill="#e95420"/></svg></button>
            </div>
            <hr>
          </div>
          <div class="metrics">
            <fieldset>
              <legend>Spacing:</legend>
              <div class="icons">
                <button class="pt" title="Increase Paragraph Spacing"><svg viewBox="0 0 16 16"><path d="M0 .5h9M0 3h9M0 5.500h9M0 10.500h9M0 13h9M0 15.500h9" stroke="#222"/><path d="M11 6h5l-2.500-3.500zM11 10h5l-2.500 3.500z" fill="#e95420"/></svg></button>
                <button class="pt" title="Decrease Paragraph Spacing" disabled><svg viewBox="0 0 16 16"><path d="M0 2h9M0 4.500h9M0 7h9M0 10h9M0 12.500h9M0 15h9" stroke="#222"/><path d="M11 3h5l-2.500 3.500zM11 14h5l-2.500-3.500z" fill="#e95420"/></svg></button>
              </div>
              <div class="spin-row"><svg viewBox="0 0 16 16"><path d="M2 .5h12M2 3h12M2 10.500h12M2 13h12M2 15.500h12" stroke="#222"/><path d="M5 9h6L8 6z" fill="#e95420"/></svg><div class="spin"><input type="text" aria-label="Above Paragraph Spacing" value="0.00 cm"><button title="Less" disabled>−</button><button title="More">+</button></div></div>
              <div class="spin-row"><svg viewBox="0 0 16 16"><path d="M2 .5h12M2 3h12M2 5.500h12M2 13h12M2 15.500h12" stroke="#222"/><path d="M5 7h6l-3 3z" fill="#e95420"/></svg><div class="spin"><input type="text" aria-label="Below Paragraph Spacing" value="0.00 cm"><button title="Less" disabled>−</button><button title="More">+</button></div></div>
              <div class="icons last"><button class="pt" title="Line Spacing"><svg viewBox="0 0 16 16"><path d="M0 2.500h9M0 5.500h9M0 8.500h9M0 11.500h9M0 14.500h9" stroke="#222"/><path d="M13.500 3v10" stroke="#e95420" stroke-width="1.400"/><path d="M11 5h5l-2.500-4zM11 11h5l-2.500 4z" fill="#e95420"/></svg></button><button class="pd" title="Line spacings"><svg class="chev"><use href="#chev"/></svg></button></div>
            </fieldset>
            <fieldset>
              <legend>Indent:</legend>
              <div class="icons">
                <button class="pt" title="Increase Indent"><svg viewBox="0 0 16 14"><use href="#indent"/></svg></button>
                <button class="pt" title="Decrease Indent"><svg viewBox="0 0 16 14"><use href="#outdent"/></svg></button>
                <button class="pt" title="Hanging Indent"><svg viewBox="0 0 16 14"><path d="M4 1.500h12M8 4.500h8M8 7.500h8M8 10.500h8" stroke="#222"/><path d="M1 7l4 2.500L1 12z" fill="#e95420"/></svg></button>
              </div>
              <div class="spin-row"><svg viewBox="0 0 16 16"><path d="M8 3.500h8M8 6h8M8 8.500h8M8 11h8M8 13.500h8" stroke="#222"/><path d="M1 3l4 2.500L1 8z" fill="#e95420"/></svg><div class="spin"><input type="text" aria-label="Before Text Indent" value="0.00 cm"><button title="Less" disabled>−</button><button title="More">+</button></div></div>
              <div class="spin-row"><svg viewBox="0 0 16 16"><path d="M0 3.500h8M0 6h8M0 8.500h8M0 11h8M0 13.500h8" stroke="#222"/><path d="M15 3l-4 2.500L15 8z" fill="#e95420"/></svg><div class="spin"><input type="text" aria-label="After Text Indent" value="0.00 cm"><button title="Less" disabled>−</button><button title="More">+</button></div></div>
              <div class="spin-row"><svg viewBox="0 0 16 14"><use href="#indent"/></svg><div class="spin"><input type="text" aria-label="First Line Indent" value="0.00 cm"><button title="Less" disabled>−</button><button title="More">+</button></div></div>
            </fieldset>
          </div>
        </aside>

        <nav class="tabs" aria-label="Sidebar decks">
          <button class="menu" title="Sidebar Settings"><svg viewBox="0 0 24 24"><path d="M7 7.500h10M7 11.500h10M7 16.500h10" stroke="#333"/></svg></button>
          <button class="on" title="Properties"><svg viewBox="0 0 24 24"><rect x="4" y="4" width="16" height="7" rx="3" fill="#e95420" stroke="none"/><circle cx="16.500" cy="7.500" r="2.600" fill="#fff" stroke="none"/><rect x="4" y="13" width="16" height="7" rx="3" fill="#e95420" stroke="none"/><circle cx="7.500" cy="16.500" r="2.600" fill="#fff" stroke="none"/></svg></button>
          <button title="Styles"><svg viewBox="0 0 24 24"><text x="11" y="13" class="ic-a" font-size="16">A</text><path d="M1 22l5-5" stroke="#f79583" stroke-width="2.500"/><path d="M3.500 10l3-3 4 1 6 6-3 3-6-2z" fill="#fff"/></svg></button>
          <button title="Gallery"><svg viewBox="0 0 24 24"><rect x="2.500" y="3.500" width="16" height="13" rx="1" fill="#d75ad0"/><rect x="5.500" y="7.500" width="16" height="13" rx="1" fill="#d75ad0"/><path d="M8 18l3-4 2 2 2-2 4 4z" fill="#fff" stroke="none"/></svg></button>
          <button title="Navigator"><svg viewBox="0 0 24 24"><circle cx="12" cy="12" r="9.500" fill="#4a78dd"/><path d="M7 17l3-7 4 4z" fill="#eee" stroke="none"/><path d="M17 7l-7 3 4 4z" fill="#e0304a" stroke="none"/><circle cx="12" cy="12" r="2.500" fill="#eee" stroke="none"/></svg></button>
          <button title="Shapes"><svg viewBox="0 0 24 24"><path d="M12 3.500l8.500 8.500-8.500 8.500L3.500 12z" fill="#fff"/></svg></button>
          <button title="Slide Transition"><svg viewBox="0 0 24 24"><use href="#screen"/><path d="M17 15.500l6 3.500-6 3.500zM23 16h1.500v7H23z" fill="#e95420" stroke="none"/></svg></button>
          <button title="Animation"><svg viewBox="0 0 24 24"><use href="#film"/></svg></button>
          <button title="Master Slides"><svg viewBox="0 0 24 24"><use href="#master"/></svg></button>
        </nav>
      </main>

      <footer class="status">
        <span class="cell c-slide">Slide 1 of 6</span>
        <span class="cell c-edit">TextEdit: Paragraph 1, Row 1, Column 13</span>
        <span class="cell c-layout">Blank Slide</span>
        <span class="cell c-pos">
          <span><svg width="16" height="12" viewBox="0 0 16 12"><path d="M6 4.500h9v6H3.500V7" fill="none" stroke="#444"/><path d="M0 2.500h5M2.500 0v5" stroke="#e95420"/></svg>1.27 / 0.76</span>
          <span><svg width="16" height="12" viewBox="0 0 16 12"><path d="M3.500 4.500h11v6h-11z" fill="none" stroke="#444"/><path d="M4 1.500h10M4.500 0v3M13.500 0v3M1.500 4v7M0 4.500h3M0 10.500h3" stroke="#e95420"/></svg>22.86 x 3.17</span>
        </span>
        <span class="cell c-icon"><svg width="12" height="12" viewBox="0 0 12 12"><path d="M4 1h3v5h2.500l-4 4.500-4-4.500H4z" fill="#9bcd3a" stroke="#4d7020"/><path d="M1 11.500h9" stroke="#444"/><circle cx="10" cy="2" r="1.500" fill="#d0203a"/></svg></span>
        <span class="cell c-sign"></span>
        <span class="cell c-lang">English (Hong Kong)</span>
        <button class="cell c-icon" title="Fit slide to window"><svg width="15" height="15" viewBox="0 0 15 15"><path d="M7.500 1v13M1 7.500h13" stroke="#e95420"/><path d="M7.500 0L10 3.500H5zM7.500 15L10 11.500H5zM0 7.500L3.500 5v5zM15 7.500L11.500 5v5z" fill="#e95420"/></svg></button>
        <span class="cell c-zoom"><button title="Zoom Out">−</button><input type="range" aria-label="Zoom" min="0" max="100" value="50"><button title="Zoom In">+</button></span>
        <span class="cell c-pct">107%</span>
      </footer>
    </div>
  </div>
</body>
</html>
```

FILE: styles.css
```css
/* Global Reset */
* { box-sizing: border-box; }
html, body { margin: 0; padding: 0; overflow: hidden; }
body {
  display: flex;
  flex-direction: column;
  height: 100vh;
  background: #fafafa;
  color: #3d3d3d;
  font-family: Ubuntu, "Noto Sans", sans-serif;
  font-size: 15px;
  line-height: 20px;
}
h1, h2, h3, p, ol, fieldset, legend { margin: 0; padding: 0; border: 0; font-size: 15px; }
h1, h2, h3 { font-weight: 700; }
button {
  display: flex;
  align-items: center;
  justify-content: center;
  padding: 0;
  border: 0;
  background: none;
  color: inherit;
  font: inherit;
}
input { width: 0; min-width: 0; font: inherit; color: #111; }
svg { display: block; flex: none; overflow: visible; }
.defs { position: absolute; width: 0; height: 0; }

/* Top bar */
.topbar {
  display: grid;
  grid-template-columns: 1fr auto 1fr;
  align-items: center;
  height: 27px;
  padding: 0 18px;
  background: #131313;
  color: #e6e6e6;
}
.topbar-left, .topbar-mid, .topbar-right { display: flex; align-items: center; }
.topbar-left { gap: 38px; }
.app-name { gap: 8px; }
.topbar-mid { gap: 18px; padding-left: 104px; }
.topbar-right { justify-content: flex-end; gap: 13px; }

/* Dock */
.desktop { display: flex; flex: 1; min-height: 0; }
.dock {
  display: flex;
  flex-direction: column;
  align-items: center;
  gap: 4px;
  width: 70px;
  padding: 6px 3px;
  background: linear-gradient(165deg, #190e17 75%, #2a1522);
}
.dock button { position: relative; width: 64px; height: 64px; border-radius: 12px; flex: none; }
.dock svg { width: 48px; height: 48px; }
.dock hr { width: 48px; height: 1px; margin: -1px 0 -1px; border: 0; background: #ccc; flex: none; }
.dock .active { background: #453b43; }
.dock .running::before {
  content: "";
  position: absolute;
  left: 0;
  width: 6px;
  height: 6px;
  border-radius: 50%;
  background: #e95420;
}
.dock .recycle {
  position: absolute;
  top: 28px;
  color: #2a8a1c;
  font: 22px/22px "DejaVu Sans", sans-serif;
}
.dock .apps { margin-top: auto; }
.dock .apps svg { width: 30px; height: 30px; }

/* Window chrome */
.window { display: flex; flex: 1; flex-direction: column; min-width: 0; }
.titlebar {
  display: flex;
  align-items: center;
  height: 37px;
  border-bottom: 1px solid #bcbcbc;
  background: #ebebeb;
}
.titlebar h1 { flex: 1; padding: 1px 0 0 97px; text-align: center; }
.win-buttons { display: flex; gap: 12px; padding-right: 7px; }
.win-buttons button { width: 22px; height: 22px; border-radius: 50%; background: #dadada; color: #333; }
.menubar { display: flex; align-items: center; height: 25px; padding-right: 11px; border-bottom: 1px solid #dcdcdc; }
.menubar nav { display: flex; flex: 1; gap: 16px; padding: 1px 0 0 8px; }

/* Toolbars */
.toolbar { display: flex; align-items: center; height: 39px; padding-left: 4px; }
.toolbar hr { width: 1px; height: 33px; margin: 0 4px 0 3px; border: 0; background: #dadada; }
.toolbar .space { width: 8px; }
.tool { width: 33px; height: 35px; padding: 0 1px 1px 0; }
.tool.wide { width: 41px; }
.tool svg { width: 24px; height: 24px; fill: none; stroke: #4d4d4d; }
.tool.wide svg { width: 28px; }
.tool svg use, .tool svg text { stroke: none; }
.tool .dim { stroke: #b8b8b8; }
.on { border: 1px solid #c2c2c2; border-radius: 6px; background: #d5d5d5; }
.dd { width: 11px; height: 35px; padding-right: 1px; color: #000; }
.dd svg { width: 8px; height: 4px; }
.dd:disabled { color: #b8b8b8; }
.ic-a, .ic-b, .ic-o { font-family: "Liberation Sans", sans-serif; font-weight: 700; fill: #2d2d2d; }
.ic-b { font-family: "DejaVu Sans", sans-serif; }
.ic-o { fill: #e95420; }

/* Work area */
.work { display: flex; flex: 1; min-height: 0; }
.slides { display: flex; flex-direction: column; width: 195px; padding-bottom: 4px; }
.slides header { display: flex; align-items: center; justify-content: space-between; height: 36px; padding: 1px 7px 0 3px; }
.slides ol {
  display: flex;
  flex: 1;
  flex-direction: column;
  gap: 10px;
  margin: 0 6px 0 2px;
  padding: 8px;
  border: solid #b5b5b5;
  border-width: 1px 0 0 1px;
  background: #fff;
  list-style: none;
}
.thumb { width: 100%; padding: 4px; align-items: flex-start; border: 0; color: #808080; font-weight: 700; }
.thumb span { width: 21px; line-height: 14px; text-align: center; padding-left: 3px; }
.thumb i {
  flex: 1;
  aspect-ratio: 141 / 107;
  border: 1px solid #777;
  background: #ff0;
  box-shadow: inset -1px -1px #fff, 0 1px 2px #999;
}
.thumb.selected {
  background: linear-gradient(#cf9e8f, #e3b3a4);
  box-shadow: inset 0 0 0 1px #a36f61;
  color: #5a4a46;
}
.thumb.selected i { background: #fff; }

.splitter { display: flex; align-items: center; width: 8px; padding-bottom: 2px; border-left: 1px solid #b5b5b5; }
.splitter button { width: 7px; height: 73px; margin-left: -2px; background: #959595; }
.splitter.right button { margin-left: -1px; }

/* Editor */
.editor { display: flex; flex: 1; flex-direction: column; min-width: 0; }
.infobar {
  display: flex;
  align-items: center;
  height: 40px;
  padding: 0 5px 0 3px;
  border: 1px solid #c0c0c0;
  background: #bce5f8;
  color: #111;
}
.infobar > svg { width: 30px; height: 30px; }
.infobar p { flex: 1; padding-left: 7px; }
.btn { height: 34px; padding: 0 15px; border: 1px solid #c4c4c4; border-radius: 6px; background: #fff; color: #3d3d3d; }
.infobar .close { width: 24px; padding-left: 8px; color: #0a4b8c; }
.canvas { position: relative; display: flex; flex: 1; padding: 11px 63px 28px 43px; }
.slide {
  display: flex;
  flex: 1;
  flex-direction: column;
  gap: 20px;
  padding: 30px 50px 81px;
  border: 2px solid #7d7d7d;
  background: #fff;
  box-shadow: 0 1px 3px #aaa;
  color: #000;
  font-family: "Liberation Sans", sans-serif;
  font-size: 26px;
  line-height: 30px;
}
/* Dashed outline: 6px dash, 3px gap */
.holder {
  position: relative;
  background:
    repeating-linear-gradient(90deg, #c4c4c4 0 6px, transparent 6px 9px) top / 100% 1px no-repeat,
    repeating-linear-gradient(90deg, #c4c4c4 0 6px, transparent 6px 9px) bottom / 100% 1px no-repeat,
    repeating-linear-gradient(#c4c4c4 0 6px, transparent 6px 9px) left / 1px 100% no-repeat,
    repeating-linear-gradient(#c4c4c4 0 6px, transparent 6px 9px) right / 1px 100% no-repeat;
}
.title { display: flex; align-items: center; height: 129px; padding-left: 10px; }
.frame { position: absolute; inset: -1px 5px -1px 4px; border: 6px solid rgba(244, 170, 145, 0.5); }
mark { border: 1px solid #e95420; background: #f9d3c7; color: #3b1207; }
.pointer { position: absolute; left: 465px; top: 64px; }
.body { display: flex; flex: 1; gap: 3px; padding: 7px 13px; }
.body b { width: 15px; height: 15px; margin-top: 4px; border-radius: 50%; background: #000; }
.body p { font-size: 26px; }
.vscroll, .hscroll { position: absolute; border-radius: 3px; background: #8a8a8a; }
.vscroll { right: 3px; top: 24.4%; width: 6px; height: 50.3%; }
.hscroll { bottom: 3px; left: 31.9%; width: 35.5%; height: 6px; }

/* Properties sidebar */
.props { width: 453px; }
.props header { display: flex; align-items: center; height: 26px; padding: 2px 6px 0 1px; }
.props header h2 { flex: 1; padding-left: 6px; }
.props h3 { display: flex; align-items: center; height: 18px; padding: 0 3px 0 2px; background: #ebebeb; line-height: 18px; }
.props h3 .chev { margin-right: 3px; }
.props h3 button { margin-left: auto; }
.chev { width: 12px; height: 7px; }
.panel { display: flex; flex-direction: column; gap: 11px; padding: 10px 10px 11px 11px; }
.panel hr { width: 100%; height: 1px; margin: -1px 0 0; border: 0; background: #dcdcdc; }
.row { display: flex; align-items: center; gap: 1px; height: 34px; }
.grow { flex: 1; }
.combo {
  display: flex;
  height: 34px;
  border: 1px solid #c4c4c4;
  border-radius: 6px;
  background: #fff;
}
.combo input { flex: 1; padding: 0 8px; border: 0; background: none; }
.combo button { width: 35px; border-left: 1px solid #c4c4c4; }
.combo.name { flex: 1; margin-right: 13px; }
.combo.size { width: 101px; }
.pt { width: 36px; height: 34px; }
.pt svg { width: 16px; height: 16px; fill: none; }
.pt:disabled { opacity: 0.5; }
.pd { width: 18px; height: 34px; margin-left: -1px; }
.gap-l { margin-left: 13px; }

.metrics { display: grid; grid-template-columns: 1fr 1fr; gap: 6px; padding: 0 6px 0 7px; margin-top: -9px; }
.metrics fieldset { display: flex; flex-direction: column; gap: 3px; min-width: 0; }
.metrics legend { height: 22px; }
.icons { display: flex; gap: 1px; height: 41px; padding: 2px 4px 0; }
.icons.last { align-items: center; padding: 0 7px; }
.spin-row { display: flex; align-items: center; }
.spin-row > svg { width: 16px; height: 16px; margin: 0 9px 0 6px; fill: none; }
.spin { display: flex; flex: 1; height: 42px; border: 1px solid #c4c4c4; border-radius: 6px; background: #fff; }
.spin input { flex: 1; padding: 0 8px; border: 0; background: none; }
.spin button { flex: none; width: 35px; padding-bottom: 2px; border-left: 1px solid #e4e4e4; font-size: 22px; font-weight: 300; }
.spin button:disabled { color: #cfcfcf; }

.tabs { display: flex; flex-direction: column; align-items: center; gap: 8px; width: 50px; padding: 2px 6px 0 0; }
.tabs button { width: 36px; height: 34px; }
.tabs .menu { margin-bottom: 3px; }
.tabs svg { width: 24px; height: 24px; fill: none; stroke: #4d4d4d; }
.tabs svg use, .tabs svg text { stroke: none; }

/* Status bar */
.status { display: flex; align-items: center; height: 21px; border-top: 1px solid #b5b5b5; font-size: 12px; line-height: 16px; }
.cell { display: flex; align-items: center; height: 14px; padding: 0 8px; border-right: 1px solid #d8d8d8; white-space: nowrap; }
.c-slide { padding-left: 10px; width: 76px; }
.c-edit { flex: 547; }
.c-layout { flex: 351; }
.c-pos { gap: 24px; width: 217px; padding-left: 11px; }
.c-pos span { display: flex; align-items: center; gap: 4px; }
.c-icon { width: 21px; padding: 0; justify-content: center; }
.c-sign { width: 29px; }
.c-lang { flex: 398; justify-content: center; }
.c-zoom { width: 143px; padding: 0 3px 0 7px; gap: 3px; }
.c-zoom button { width: 16px; font-size: 18px; font-weight: 700; color: #555; }
.c-zoom input { flex: 1; height: 10px; margin: 0; appearance: none; background: linear-gradient(#999, #999) center / 100% 2px no-repeat; }
.c-zoom input::-webkit-slider-thumb { appearance: none; width: 9px; height: 9px; border: 1px solid #555; border-radius: 50%; background: #fff; }
.c-pct { width: 49px; border: 0; }
```
